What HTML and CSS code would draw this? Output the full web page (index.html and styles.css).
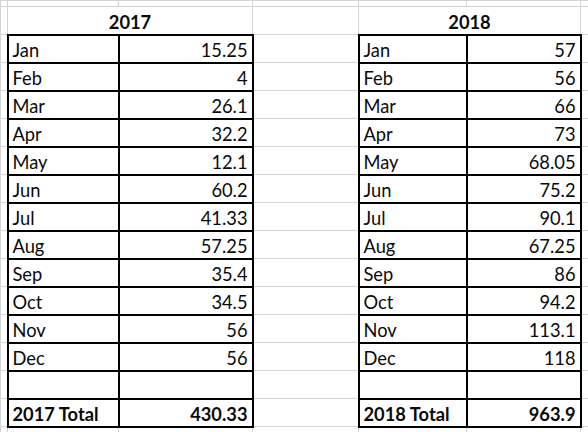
FILE: index.html
```html
<!DOCTYPE html>
<html lang="en">
<head>
<meta charset="utf-8">
<title>2017 / 2018 totals</title>
<link rel="stylesheet" href="styles.css">
</head>
<body>
<table class="sheet">
  <colgroup>
    <col class="col-a"><col class="col-b"><col class="col-c"><col class="col-d"><col class="col-e"><col class="col-f"><col class="col-g">
  </colgroup>
  <tbody>
    <tr class="edge"><td></td><td></td><td></td><td></td><td></td><td></td><td></td></tr>
    <tr class="row"><td></td><td colspan="2" class="head">2017</td><td></td><td colspan="2" class="head">2018</td><td></td></tr>
    <tr class="row"><td></td><td class="box lbl">Jan</td><td class="box num">15.25</td><td></td><td class="box lbl">Jan</td><td class="box num">57</td><td></td></tr>
    <tr class="row"><td></td><td class="box lbl">Feb</td><td class="box num">4</td><td></td><td class="box lbl">Feb</td><td class="box num">56</td><td></td></tr>
    <tr class="row"><td></td><td class="box lbl">Mar</td><td class="box num">26.1</td><td></td><td class="box lbl">Mar</td><td class="box num">66</td><td></td></tr>
    <tr class="row"><td></td><td class="box lbl">Apr</td><td class="box num">32.2</td><td></td><td class="box lbl">Apr</td><td class="box num">73</td><td></td></tr>
    <tr class="row"><td></td><td class="box lbl">May</td><td class="box num">12.1</td><td></td><td class="box lbl">May</td><td class="box num">68.05</td><td></td></tr>
    <tr class="row"><td></td><td class="box lbl">Jun</td><td class="box num">60.2</td><td></td><td class="box lbl">Jun</td><td class="box num">75.2</td><td></td></tr>
    <tr class="row"><td></td><td class="box lbl">Jul</td><td class="box num">41.33</td><td></td><td class="box lbl">Jul</td><td class="box num">90.1</td><td></td></tr>
    <tr class="row"><td></td><td class="box lbl">Aug</td><td class="box num">57.25</td><td></td><td class="box lbl">Aug</td><td class="box num">67.25</td><td></td></tr>
    <tr class="row"><td></td><td class="box lbl">Sep</td><td class="box num">35.4</td><td></td><td class="box lbl">Sep</td><td class="box num">86</td><td></td></tr>
    <tr class="row"><td></td><td class="box lbl">Oct</td><td class="box num">34.5</td><td></td><td class="box lbl">Oct</td><td class="box num">94.2</td><td></td></tr>
    <tr class="row"><td></td><td class="box lbl">Nov</td><td class="box num">56</td><td></td><td class="box lbl">Nov</td><td class="box num">113.1</td><td></td></tr>
    <tr class="row"><td></td><td class="box lbl">Dec</td><td class="box num">56</td><td></td><td class="box lbl">Dec</td><td class="box num">118</td><td></td></tr>
    <tr class="row"><td></td><td class="box lbl"></td><td class="box num"></td><td></td><td class="box lbl"></td><td class="box num"></td><td></td></tr>
    <tr class="row"><td></td><td class="box lbl total">2017 Total</td><td class="box num total">430.33</td><td></td><td class="box lbl total">2018 Total</td><td class="box num total">963.9</td><td></td></tr>
    <tr class="edge"><td></td><td></td><td></td><td></td><td></td><td></td><td></td></tr>
  </tbody>
</table>
</body>
</html>
```

FILE: styles.css
```css
html, body {
  margin: 0;
  padding: 0;
  background: #ffffff;
}

body {
  width: 588px;
  height: 432px;
  overflow: hidden;
}

.sheet {
  border-collapse: collapse;
  table-layout: fixed;
  width: 588px;
  font-family: Lato, "Open Sans", sans-serif;
  font-size: 18.3px;
  color: #0a0a0a;
}

.col-a { width: 7px; }
.col-b { width: 111px; }
.col-c { width: 134px; }
.col-d { width: 106px; }
.col-e { width: 108px; }
.col-f { width: 114px; }
.col-g { width: 8px; }

.sheet td {
  border: 1px solid #d4d4d4;
  padding: 0 4px 1px 4px;
  line-height: 22px;
  vertical-align: bottom;
  white-space: nowrap;
  overflow: hidden;
}

.edge {
  height: 6px;
}

.edge td {
  padding: 0;
  line-height: 0;
}

.row {
  height: 28px;
}

.head {
  text-align: center;
  font-weight: 700;
}

.box {
  border: 2px solid #000 !important;
}

.lbl {
  text-align: left;
}

.num {
  text-align: right;
}

.total {
  font-weight: 700;
}
```
